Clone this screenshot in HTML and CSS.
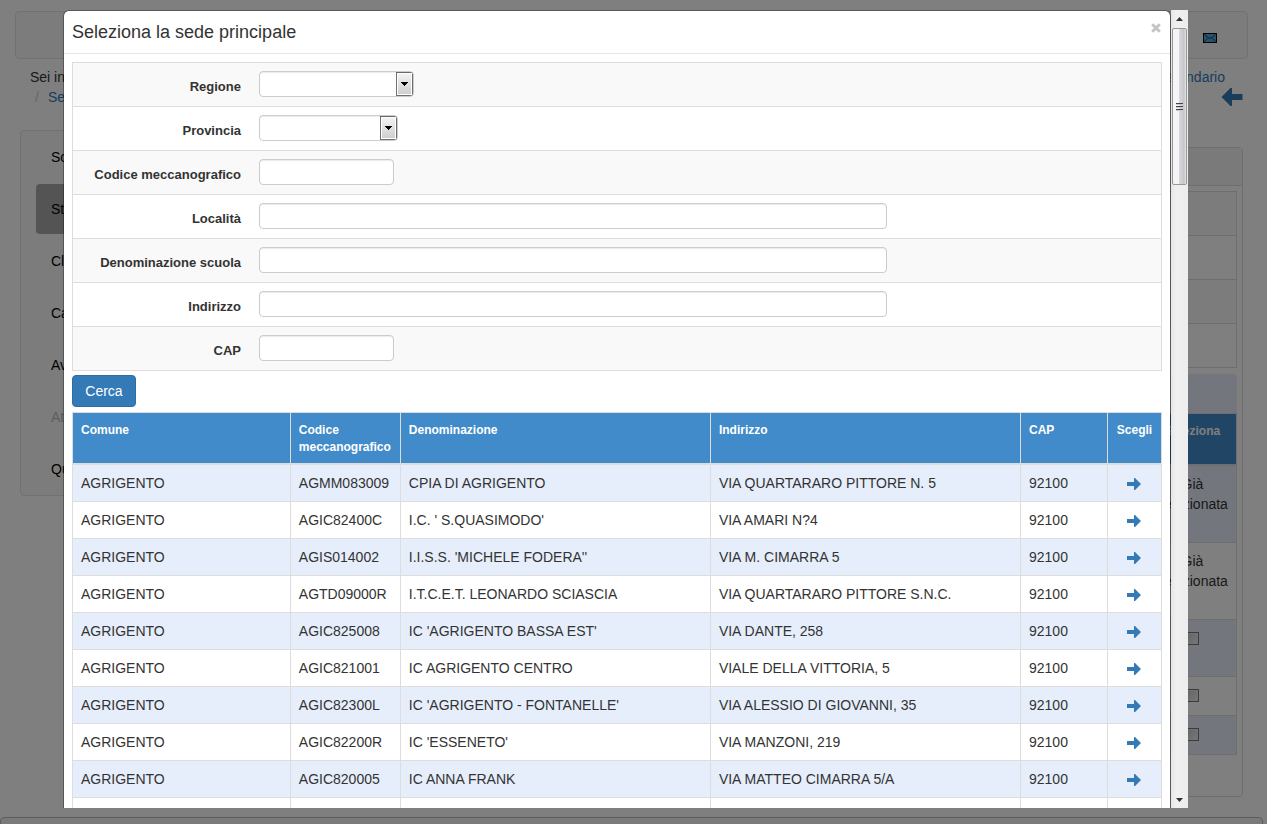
FILE: index.html
```html
<!DOCTYPE html>
<html lang="it">
<head>
<meta charset="utf-8">
<title>Seleziona la sede principale</title>
<link rel="stylesheet" href="styles.css">
</head>
<body>
<svg class="defs" aria-hidden="true">
  <symbol id="arrow" viewBox="0 0 14 12"><path d="M0 4h7V0h1l6 6-6 6H7V8H0z"/></symbol>
</svg>
<div class="page">
  <header class="well topbar">
    <svg class="mail" viewBox="0 0 14 10" aria-hidden="true"><rect x=".5" y=".5" width="13" height="9" fill="#50a8dc" stroke="#000"/><path d="M1.500 1.500l4 3.500h3l4-3.500M1.500 8.500l3-3M12.500 8.500l-3-3" fill="none" stroke="#124" stroke-width=".8"/></svg>
  </header>
  <div class="crumbs">
    <div class="crumb-left">Sei in:<br><span class="slash">/</span><a href="#">Sedi</a></div>
    <div class="crumb-right"><a href="#">Calendario</a><svg class="back" aria-hidden="true"><use href="#arrow"/></svg></div>
  </div>
  <div class="columns">
    <nav class="well side">
      <a href="#">Scuola</a>
      <a href="#" class="active">Studenti</a>
      <a href="#">Classi</a>
      <a href="#">Calendario</a>
      <a href="#">Avvisi</a>
      <a href="#" class="off">Attività</a>
      <a href="#">Quadro</a>
    </nav>
    <main class="panel">
      <div class="panel-head"></div>
      <div class="panel-body">
        <div class="lines"><div></div><div></div><div></div><div></div></div>
        <div class="caption"></div>
        <table class="under">
          <thead><tr><th></th><th class="pick">Seleziona</th></tr></thead>
          <tbody>
            <tr class="tall"><td></td><td class="pick">Già selezionata</td></tr>
            <tr class="tall"><td></td><td class="pick">Già selezionata</td></tr>
            <tr class="mid"><td></td><td class="pick"><input type="checkbox" aria-label="Seleziona riga 3"></td></tr>
            <tr><td></td><td class="pick"><input type="checkbox" aria-label="Seleziona riga 4"></td></tr>
            <tr><td></td><td class="pick"><input type="checkbox" aria-label="Seleziona riga 5"></td></tr>
          </tbody>
        </table>
      </div>
    </main>
  </div>
  <footer class="well foot"></footer>

  <div class="backdrop"></div>
  <div class="viewport">
    <section class="modal" role="dialog" aria-labelledby="title">
      <div class="modal-head">
        <h1 id="title">Seleziona la sede principale</h1>
        <button type="button" class="close" aria-label="Chiudi"><svg viewBox="0 0 10 10" aria-hidden="true"><path d="M1.200 1.200l7.600 7.600M8.800 1.200L1.200 8.800"/></svg></button>
      </div>
      <div class="modal-body">
        <form>
          <div class="fields">
            <div class="field"><label for="regione">Regione</label><select id="regione" class="w-reg"><option></option></select></div>
            <div class="field"><label for="provincia">Provincia</label><select id="provincia" class="w-prov"><option></option></select></div>
            <div class="field"><label for="codice">Codice meccanografico</label><input id="codice" type="text" class="w-short"></div>
            <div class="field"><label for="localita">Località</label><input id="localita" type="text" class="w-long"></div>
            <div class="field"><label for="denominazione">Denominazione scuola</label><input id="denominazione" type="text" class="w-long"></div>
            <div class="field"><label for="indirizzo">Indirizzo</label><input id="indirizzo" type="text" class="w-long"></div>
            <div class="field"><label for="cap">CAP</label><input id="cap" type="text" class="w-short"></div>
          </div>
          <button type="button" class="search">Cerca</button>
        </form>
        <table class="results">
          <colgroup><col class="c-comune"><col class="c-codice"><col><col><col class="c-cap"><col class="c-go"></colgroup>
          <thead><tr><th>Comune</th><th>Codice meccanografico</th><th>Denominazione</th><th>Indirizzo</th><th>CAP</th><th class="go">Scegli</th></tr></thead>
          <tbody>
            <tr><td>AGRIGENTO</td><td>AGMM083009</td><td>CPIA DI AGRIGENTO</td><td>VIA QUARTARARO PITTORE N. 5</td><td>92100</td><td class="go"><a href="#" aria-label="Scegli"><svg><use href="#arrow"/></svg></a></td></tr>
            <tr><td>AGRIGENTO</td><td>AGIC82400C</td><td>I.C. ' S.QUASIMODO'</td><td>VIA AMARI N?4</td><td>92100</td><td class="go"><a href="#" aria-label="Scegli"><svg><use href="#arrow"/></svg></a></td></tr>
            <tr><td>AGRIGENTO</td><td>AGIS014002</td><td>I.I.S.S. 'MICHELE FODERA''</td><td>VIA M. CIMARRA 5</td><td>92100</td><td class="go"><a href="#" aria-label="Scegli"><svg><use href="#arrow"/></svg></a></td></tr>
            <tr><td>AGRIGENTO</td><td>AGTD09000R</td><td>I.T.C.E.T. LEONARDO SCIASCIA</td><td>VIA QUARTARARO PITTORE S.N.C.</td><td>92100</td><td class="go"><a href="#" aria-label="Scegli"><svg><use href="#arrow"/></svg></a></td></tr>
            <tr><td>AGRIGENTO</td><td>AGIC825008</td><td>IC 'AGRIGENTO BASSA EST'</td><td>VIA DANTE, 258</td><td>92100</td><td class="go"><a href="#" aria-label="Scegli"><svg><use href="#arrow"/></svg></a></td></tr>
            <tr><td>AGRIGENTO</td><td>AGIC821001</td><td>IC AGRIGENTO CENTRO</td><td>VIALE DELLA VITTORIA, 5</td><td>92100</td><td class="go"><a href="#" aria-label="Scegli"><svg><use href="#arrow"/></svg></a></td></tr>
            <tr><td>AGRIGENTO</td><td>AGIC82300L</td><td>IC 'AGRIGENTO - FONTANELLE'</td><td>VIA ALESSIO DI GIOVANNI, 35</td><td>92100</td><td class="go"><a href="#" aria-label="Scegli"><svg><use href="#arrow"/></svg></a></td></tr>
            <tr><td>AGRIGENTO</td><td>AGIC82200R</td><td>IC 'ESSENETO'</td><td>VIA MANZONI, 219</td><td>92100</td><td class="go"><a href="#" aria-label="Scegli"><svg><use href="#arrow"/></svg></a></td></tr>
            <tr><td>AGRIGENTO</td><td>AGIC820005</td><td>IC ANNA FRANK</td><td>VIA MATTEO CIMARRA 5/A</td><td>92100</td><td class="go"><a href="#" aria-label="Scegli"><svg><use href="#arrow"/></svg></a></td></tr>
            <tr class="blank"><td></td><td></td><td></td><td></td><td></td><td></td></tr>
          </tbody>
        </table>
      </div>
    </section>
    <div class="scrollbar" aria-hidden="true">
      <svg class="tip" viewBox="0 0 17 17"><path d="M5 11l3.500-4L12 11z"/></svg>
      <div class="thumb"><i></i><i></i><i></i></div>
      <svg class="tip last" viewBox="0 0 17 17"><path d="M5 7l3.500 4L12 7z"/></svg>
    </div>
  </div>
</div>
</body>
</html>
```
FILE: styles.css
```css
* { box-sizing: border-box; }
body {
  margin: 0;
  background: #fff;
  color: #333;
  font: 14px/20px "Liberation Sans", Arial, sans-serif;
}
a { color: #337ab7; text-decoration: none; }
.defs { position: absolute; width: 0; height: 0; }
.page {
  position: relative;
  height: 100vh;
  margin-right: 12px;
  padding-top: 11px;
  overflow: hidden;
}
.well {
  background: #f8f8f8;
  border: 1px solid #e3e3e3;
  border-radius: 4px;
}

/* page under the dialog */
.topbar {
  display: flex;
  justify-content: flex-end;
  align-items: center;
  height: 48px;
  margin: 0 19px 0 15px;
  padding: 6px 30px 0 0;
}
.mail { width: 14px; height: 10px; }
.crumbs {
  display: flex;
  justify-content: space-between;
  padding: 8px 24px 23px 30px;
}
.slash { padding: 0 9px 0 5px; color: #ccc; }
.crumb-right { display: flex; flex-direction: column; align-items: flex-end; }
.crumb-right a { padding-right: 18px; }
.back { width: 22px; height: 18px; margin-top: 1px; fill: #337ab7; transform: rotate(180deg); }
.columns {
  display: grid;
  grid-template-columns: 290px 1fr;
  align-items: start;
  gap: 30px;
  padding: 0 24px 0 20px;
}
.side {
  display: flex;
  flex-direction: column;
  gap: 2px;
  padding: 0 15px 1px;
}
.side a { padding: 15px; padding-right: 0; color: #000; border-radius: 4px; }
.side a:first-child { padding-top: 16px; }
.side a.active { background: #a9a9a9; }
.side a.off { color: #bbb; }
.panel {
  margin-top: 17px;
  background: #fff;
  border: 1px solid #ddd;
  border-radius: 4px;
}
.panel-head { height: 38px; background: #f5f5f5; border-bottom: 1px solid #ddd; }
.panel-body { padding: 5px 5px 41px; }
.lines { border: 1px solid #ddd; }
.lines div { height: 44px; border-bottom: 1px solid #ddd; }
.lines div:nth-child(odd) { background: #f9f9f9; }
.lines div:last-child { height: 43px; border-bottom: 0; }
.caption { height: 39px; margin-top: 6px; background: #e6eefb; border-radius: 4px 4px 0 0; }
.under { width: 100%; border-collapse: collapse; }
.under th, .under td { padding: 8px; border: 1px solid #ddd; vertical-align: top; }
.under th { height: 51px; background: #428bca; color: #fff; font-size: 12px; line-height: 17px; border-bottom-width: 2px; }
.under th.pick { padding-top: 9px; }
.under td { height: 39px; }
.under .tall td { height: 77px; }
.under .tall:first-child td { height: 78px; }
.under .mid td { height: 57px; }
.under .pick { width: 88px; text-align: center; }
.under tbody tr:nth-child(odd) { background: #e6eefb; }
.under input {
  appearance: none;
  width: 13px;
  height: 13px;
  margin: 4px 0 0;
  border: 1px solid #777;
  background: linear-gradient(135deg, #c4c8cc, #f0f0f0);
  box-shadow: inset 0 0 0 1px #e8e8e8;
}
.foot { height: 40px; margin: 20px 4px 0 0; border-color: #bbb; background: #f5f5f5; }

/* dialog */
.backdrop { position: absolute; inset: 0; background: rgba(0, 0, 0, .5); }
.viewport {
  position: absolute;
  top: 10px;
  right: 79px;
  bottom: 16px;
  left: 63px;
  display: flex;
  overflow: hidden;
}
.modal {
  flex: 1;
  background: #fff;
  background-clip: padding-box;
  border: 1px solid rgba(0, 0, 0, .3);
  border-bottom: 0;
  border-radius: 6px 6px 0 0;
}
.modal-head {
  display: flex;
  justify-content: space-between;
  align-items: flex-start;
  padding: 8px;
  border-bottom: 1px solid #e5e5e5;
}
.modal-head h1 { margin: 0; font-size: 18px; font-weight: 400; line-height: 26px; }
.close { padding: 4px 1px; border: 0; background: none; line-height: 0; }
.close svg { width: 10px; height: 10px; fill: none; stroke: #c4c4c4; stroke-width: 3; }
.modal-body { padding: 8px; }
.fields { border: 1px solid #ddd; border-bottom: 0; }
.field {
  display: grid;
  grid-template-columns: 168px 1fr;
  column-gap: 18px;
  height: 44px;
  padding-top: 8px;
  border-bottom: 1px solid #ddd;
}
.field:nth-child(odd) { background: #f9f9f9; }
.field label { padding-top: 6px; font-size: 13px; font-weight: 700; text-align: right; }
.field input, .field select {
  height: 26px;
  padding: 2px 8px;
  border: 1px solid #ccc;
  border-radius: 4px;
  background: #fff;
  box-shadow: inset 0 1px 1px rgba(0, 0, 0, .08);
  font: inherit;
}
.field select {
  appearance: none;
  background:
    linear-gradient(#000, #000) right 5px top 10px / 7px 1px no-repeat,
    linear-gradient(#000, #000) right 6px top 11px / 5px 1px no-repeat,
    linear-gradient(#000, #000) right 7px top 12px / 3px 1px no-repeat,
    linear-gradient(#000, #000) right 8px top 13px / 1px 1px no-repeat,
    linear-gradient(#f2f2f2, #cfcfcf) right 2px top 2px / 13px 20px no-repeat,
    linear-gradient(#fff, #fff) right 1px top 1px / 15px 22px no-repeat,
    linear-gradient(#707070, #707070) right 0 top 0 / 17px 24px no-repeat,
    #fff;
}
.w-reg { width: 155px; }
.w-prov { width: 139px; }
.w-short { width: 135px; }
.w-long { width: 628px; max-width: 100%; }
.search {
  display: block;
  min-width: 64px;
  height: 32px;
  margin: 4px 0 5px;
  padding: 0 12px;
  border: 1px solid #2e6da4;
  border-radius: 4px;
  background: #337ab7;
  color: #fff;
  font: inherit;
}
.results { width: 100%; table-layout: fixed; border-collapse: collapse; }
.results th, .results td {
  padding: 8px;
  border: 1px solid #ddd;
  text-align: left;
  vertical-align: top;
}
.results th {
  padding-top: 9px;
  padding-bottom: 7px;
  border-bottom-width: 2px;
  background: #428bca;
  color: #fff;
  font-size: 12px;
  line-height: 17px;
}
.results tbody tr:nth-child(odd) { background: #e6eefb; }
.results .go { padding-right: 0; padding-left: 0; text-align: center; }
.results td.go { padding-right: 2px; }
.go svg { width: 14px; height: 12px; fill: #337ab7; vertical-align: -2px; }
.blank td { height: 37px; }
.c-comune { width: 20%; }
.c-codice { width: 110px; }
.c-cap { width: 87px; }
.c-go { width: 54px; }

.scrollbar {
  display: flex;
  flex-direction: column;
  width: 17px;
  background: linear-gradient(90deg, #e6e6e6, #f0f0f0 30%, #ededed);
}
.tip { width: 17px; height: 17px; fill: #333; }
.tip.last { margin-top: auto; }
.thumb {
  display: flex;
  flex-direction: column;
  justify-content: center;
  align-items: center;
  gap: 1px;
  height: 157px;
  margin: 1px 1px 0;
  border: 1px solid #979797;
  border-radius: 2px;
  background: linear-gradient(90deg, #f5f5f5 45%, #d8d8dc 50%, #c4c4ca 85%, #e8e8e8);
}
.thumb i { width: 7px; height: 2px; border-top: 1px solid #444; background: #ccc; }
```
